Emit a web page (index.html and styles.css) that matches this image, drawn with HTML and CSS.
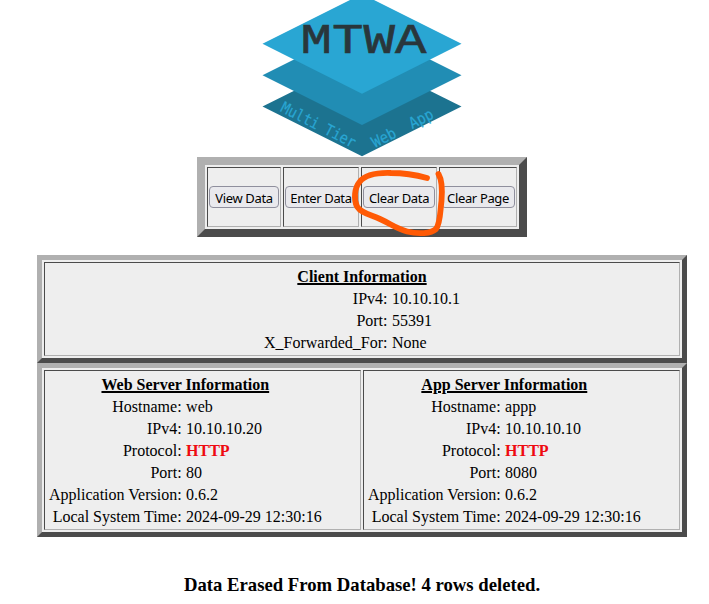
FILE: index.html
```html
<!DOCTYPE html>
<html lang="en">
<head>
<meta charset="utf-8">
<title>MTWA</title>
<link rel="stylesheet" href="styles.css">
</head>
<body>
<main class="page">
  <svg class="logo" viewBox="262 0 200 157" width="200" height="157">
    <path fill="#1c7390" d="M262.5 106.5 362 57l99.500 49.500L362 156.300z"/>
    <path fill="#218db4" d="M262.500 75.200 362 25.500l99.500 49.700L362 125z"/>
    <path fill="#29a6d3" d="M262.500 43.800 362-6l99.500 49.800L362 93.700z"/>
    <text class="logo-name" x="300.500" y="53" textLength="126" lengthAdjust="spacingAndGlyphs">MTWA</text>
    <text class="logo-sub" transform="translate(279.500 111) rotate(27)" textLength="82" lengthAdjust="spacingAndGlyphs">Multi Tier</text>
    <text class="logo-sub" transform="translate(375 148) rotate(-27)" textLength="67" lengthAdjust="spacingAndGlyphs" xml:space="preserve">Web  App</text>
  </svg>

  <div class="nav">
    <table class="nav-table">
      <tr>
        <td><button class="b-view">View Data</button></td>
        <td><button class="b-enter">Enter Data</button></td>
        <td><button class="b-clear">Clear Data</button></td>
        <td><button class="b-page">Clear Page</button></td>
      </tr>
    </table>
    <svg class="marker" viewBox="350 165 100 75" width="100" height="75">
      <path d="M427 178C416 175 404 173 391 173C376 172.500 365 175 359.500 182C354.500 188 353.500 199 357 206.500C361 213 370 214.500 380 219C391 224 396 228.500 407 231.500C419 234.500 431 233.500 436 229C440.500 223 440 212 441.500 201C442.500 189 442 180 438.500 174"/>
    </svg>
  </div>

  <table class="panel panel-client">
    <tr><td>
      <table class="info">
        <tr><th colspan="2">Client Information</th></tr>
        <tr><td>IPv4:</td><td>10.10.10.1</td></tr>
        <tr><td>Port:</td><td>55391</td></tr>
        <tr><td>X_Forwarded_For:</td><td>None</td></tr>
      </table>
    </td></tr>
  </table>
  <table class="panel">
    <tr>
      <td>
        <table class="info">
          <tr><th colspan="2">Web Server Information</th></tr>
          <tr><td>Hostname:</td><td>web</td></tr>
          <tr><td>IPv4:</td><td>10.10.10.20</td></tr>
          <tr><td>Protocol:</td><td><b class="insecure">HTTP</b></td></tr>
          <tr><td>Port:</td><td>80</td></tr>
          <tr><td>Application Version:</td><td>0.6.2</td></tr>
          <tr><td>Local System Time:</td><td>2024-09-29 12:30:16</td></tr>
        </table>
      </td>
      <td>
        <table class="info">
          <tr><th colspan="2">App Server Information</th></tr>
          <tr><td>Hostname:</td><td>appp</td></tr>
          <tr><td>IPv4:</td><td>10.10.10.10</td></tr>
          <tr><td>Protocol:</td><td><b class="insecure">HTTP</b></td></tr>
          <tr><td>Port:</td><td>8080</td></tr>
          <tr><td>Application Version:</td><td>0.6.2</td></tr>
          <tr><td>Local System Time:</td><td>2024-09-29 12:30:16</td></tr>
        </table>
      </td>
    </tr>
  </table>

  <h3 class="message">Data Erased From Database! 4 rows deleted.</h3>
</main>
</body>
</html>
```
FILE: styles.css
```css
body {
  margin: 0;
  height: 604px;
  overflow: hidden;
  background: #fff;
  color: #000;
  font: 16px/18px "Liberation Serif", serif;
}

.page {
  width: 650px;
  margin-left: 37px;
}

.logo {
  display: block;
  margin: 0 auto;
  overflow: visible;
}

.logo-name {
  font: 43px "Liberation Mono", monospace;
  fill: #29363b;
  stroke: #29363b;
  stroke-width: 0.6px;
}

.logo-sub {
  font: 15.5px "DejaVu Sans Mono", monospace;
  fill: #29a6d3;
  stroke: #29a6d3;
  stroke-width: 0.2px;
  white-space: pre;
}

table {
  border-spacing: 2px;
}

.nav {
  position: relative;
  width: 330px;
  height: 80px;
  margin: 0 auto 18px;
}

.nav-table,
.panel {
  box-sizing: border-box;
  background: #eee;
  border-style: solid;
  border-color: #b0b0b0 #4b4b4b #4b4b4b #b0b0b0;
}

.nav-table {
  width: 330px;
  height: 80px;
  border-width: 8px;
}

.nav-table td,
.panel > tbody > tr > td {
  padding: 1px;
  border: 1px solid;
  border-color: #4b4b4b #b0b0b0 #b0b0b0 #4b4b4b;
}

button {
  display: block;
  box-sizing: border-box;
  height: 22px;
  padding: 1px 0 0;
  border: 1px solid #8f8f9d;
  border-radius: 4px;
  background: #e9e9ed;
  color: #000;
  font: 13px/18px "Noto Sans", sans-serif;
  letter-spacing: -0.35px;
  white-space: nowrap;
}

.b-view { width: 70px; }
.b-enter,
.b-clear { width: 72px; }
.b-page { width: 74px; }

.marker {
  position: absolute;
  left: 153px;
  top: 8px;
  fill: none;
  stroke: #ff5a05;
  stroke-width: 5.8px;
  stroke-linecap: round;
  stroke-linejoin: round;
}

.panel {
  width: 650px;
  border-width: 5px;
  table-layout: fixed;
}

.info td,
.info th {
  padding: 2px 1px 0;
  height: 18px;
}

.panel-client .info {
  margin: 0 auto;
}

.info th {
  text-align: center;
  text-decoration: underline;
  text-decoration-thickness: 2px;
}

.info td:first-child {
  text-align: right;
}

.info td:last-child {
  padding-left: 1.5px;
}

.insecure {
  color: #ee0a10;
}

.message {
  margin: 37px 0 0;
  font-size: 18.72px;
  line-height: 22px;
  text-align: center;
}
```
